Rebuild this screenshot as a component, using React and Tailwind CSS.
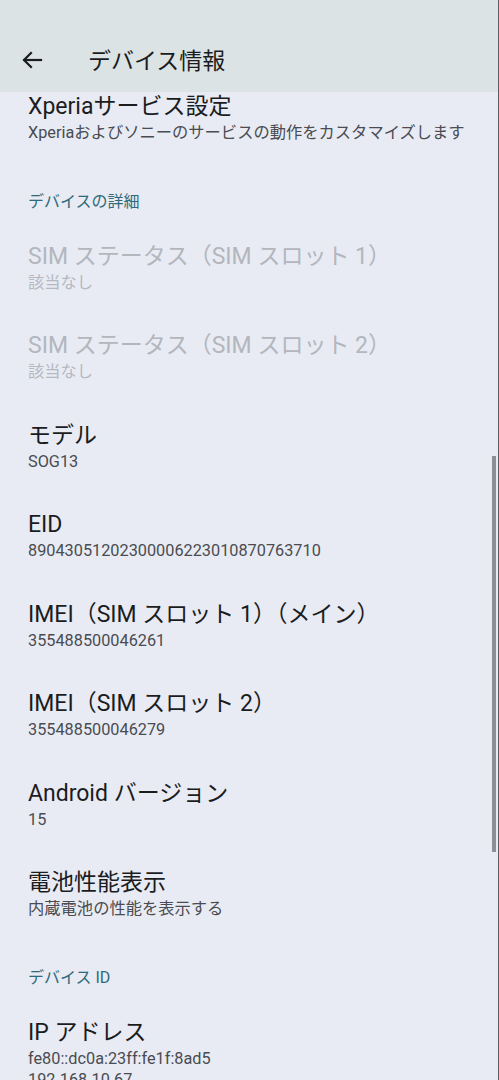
import React from 'react';

const font = { fontFamily: 'Roboto, "Noto Sans CJK JP", sans-serif' };

const BackIcon = () => (
    <svg width="24" height="24" viewBox="0 0 24 24" fill="none" stroke="#1b1c1e" strokeWidth="2.2" strokeLinecap="square">
        <path d="M21 12H4.5" />
        <path d="M11 5l-7 7 7 7" />
    </svg>
);

const Item = ({ title, sub, disabled }) => (
    <div className="px-[28px] py-[19px]">
        <div className={`text-[23px] leading-[30px] ${disabled ? 'text-[#b3b6bd]' : 'text-[#1b1c1e]'}`}>{title}</div>
        {sub.map((s, i) => (
            <div key={i} className={`text-[16.3px] leading-[21.5px] ${disabled ? 'text-[#b5b8bf]' : 'text-[#4a4c52]'}`}>{s}</div>
        ))}
    </div>
);

const Section = ({ label }) => (
    <div className="px-[28px] pt-[28px] pb-[11px] text-[16px] leading-[21px] text-[#2d6a7a]">{label}</div>
);

export default function App() {
    return (
        <div className="relative w-[499px] h-[1080px] overflow-hidden bg-[#e8ebf3] border-r border-[#5b5f64] flex flex-col" style={font}>
            <header className="h-[92px] shrink-0 bg-[#dbe3e5] pt-[44px]">
                <div className="h-[32px] flex items-center">
                    <div className="w-[88px] pl-[20px] flex items-center"><BackIcon /></div>
                    <h1 className="text-[23px] leading-[32px] pt-[3px] text-[#1b1c1e]">デバイス情報</h1>
                </div>
            </header>
            <main className="flex-1 overflow-hidden">
                <div className="-mt-[19px]">
                    <Item title="Xperiaサービス設定" sub={['Xperiaおよびソニーのサービスの動作をカスタマイズします']} />
                    <Section label="デバイスの詳細" />
                    <Item title="SIM ステータス（SIM スロット 1）" sub={['該当なし']} disabled />
                    <Item title="SIM ステータス（SIM スロット 2）" sub={['該当なし']} disabled />
                    <Item title="モデル" sub={['SOG13']} />
                    <Item title="EID" sub={['89043051202300006223010870763710']} />
                    <Item title="IMEI（SIM スロット 1）（メイン）" sub={['355488500046261']} />
                    <Item title="IMEI（SIM スロット 2）" sub={['355488500046279']} />
                    <Item title="Android バージョン" sub={['15']} />
                    <Item title="電池性能表示" sub={['内蔵電池の性能を表示する']} />
                    <Section label="デバイス ID" />
                    <Item title="IP アドレス" sub={['fe80::dc0a:23ff:fe1f:8ad5', '192.168.10.67']} />
                </div>
            </main>
            <div className="absolute right-[2px] top-[456px] w-[4px] h-[396px] bg-[#8c8f96]" />
        </div>
    );
}
